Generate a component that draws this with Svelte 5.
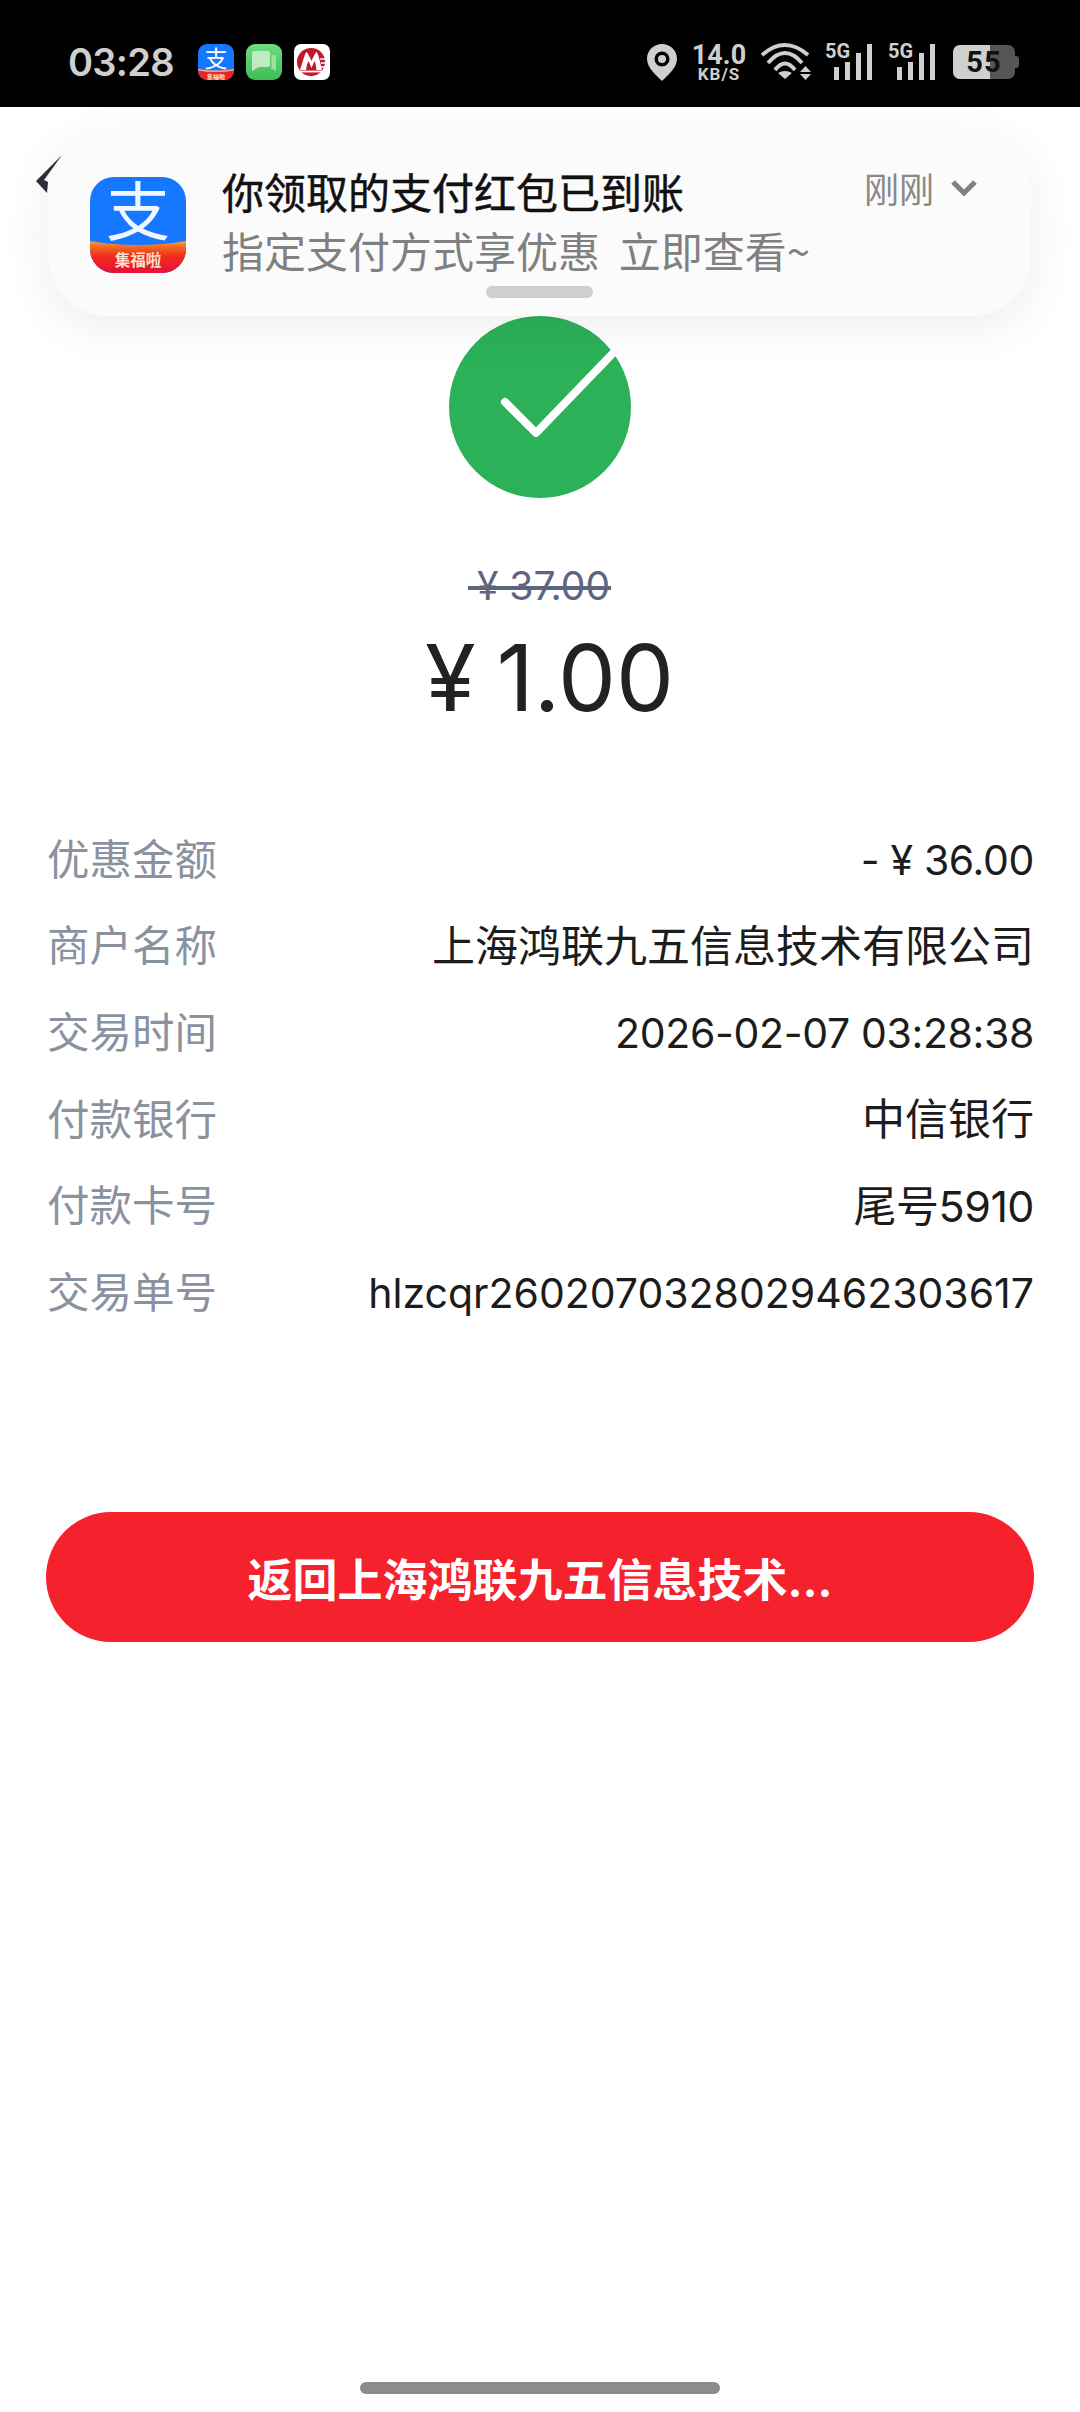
<script>
  const rows = [
    ['优惠金额', '- ¥ 36.00', 'latin tight'],
    ['商户名称', '上海鸿联九五信息技术有限公司', ''],
    ['交易时间', '2026-02-07 03:28:38', 'latin tight'],
    ['付款银行', '中信银行', ''],
    ['付款卡号', '尾号5910', 'mixed'],
    ['交易单号', 'hlzcqr2602070328029462303617', 'latin']
  ];
</script>

<div class="screen">
  <header class="status">
    <div class="left">
      <span class="time">03:28</span>
      <svg class="app" viewBox="0 0 36 36">
        <defs>
          <clipPath id="sq"><rect width="36" height="36" rx="9" /></clipPath>
          <linearGradient id="msg" x1="0" y1="0" x2="0" y2="1"><stop offset="0" stop-color="#6fdc7f" /><stop offset="1" stop-color="#3fbd58" /></linearGradient>
        </defs>
        <g clip-path="url(#sq)">
          <rect width="36" height="36" fill="#1677ff" />
          <path d="M0 26 Q18 29 36 26 V36 H0 Z" fill="#e8262a" />
          <path d="M0 25 Q18 28 36 25 V26.500 Q18 29.500 0 26.500 Z" fill="#f6b27a" />
        </g>
        <text x="18" y="23" text-anchor="middle" font-size="23" fill="#fff" class="svgt">支</text>
        <text x="18" y="34.500" text-anchor="middle" font-size="6" font-weight="700" fill="#ffe2c8" class="svgt">集福啦</text>
      </svg>
      <svg class="app" viewBox="0 0 36 36">
        <rect width="36" height="36" rx="9" fill="url(#msg)" />
        <path d="M6 9 Q6 7 8 7 H22 Q24 7 24 9 V21 Q24 23 22 23 H13 L6 27 Z" fill="#bfeac2" />
        <path d="M25.500 11 H28 Q30 11 30 13 V27 L25 24.500 H13 L15 24.500 H23 Q25.500 24.500 25.500 22 Z" fill="#9be3a4" />
      </svg>
      <svg class="app" viewBox="0 0 36 36">
        <rect width="36" height="36" rx="7" fill="#fff" />
        <circle cx="17" cy="18" r="14" fill="#c0182f" />
        <path d="M6 26 C9 18 10 11 12.500 8 C14.500 10 16 14 17.500 17 C19 14 20.500 10 22.500 8 C25 11 26 18 28 26 H22.500 C22 22 21.500 19 20.500 17 L17.500 24 L14.500 17 C13.500 19 12.500 22 12 26 Z" fill="#fff" />
        <path d="M4 27.500 h26" stroke="#fff" stroke-width="1.800" />
        <path d="M26 15h8M27 19h7M26 23h8" stroke="#fff" stroke-width="1.500" />
      </svg>
    </div>
    <div class="right">
      <svg class="pin" viewBox="0 0 30 37">
        <path d="M15 0C6.700 0 0 6.600 0 14.800 0 24 9 31 15 37c6-6 15-13 15-22.200C30 6.600 23.300 0 15 0z" fill="#cfcfcf" />
        <circle cx="15" cy="15" r="7.500" fill="#000" />
        <circle cx="15" cy="15" r="4" fill="#cfcfcf" />
      </svg>
      <div class="speed"><span class="num">14.0</span><span class="unit">KB/S</span></div>
      <svg class="wifi" viewBox="0 0 51 36">
        <path d="M2 11 Q25 -9 48 11" />
        <path d="M8 19 Q25 -1 42 19" />
        <path d="M15 26 Q25 13 35 26" />
        <path d="M18 29 Q25 25 32 29 L25 35 Z" class="solid" />
        <path d="M45.500 22 L51 28 H40 Z M40 30 H51 L45.500 36 Z" class="solid" />
      </svg>
      {#each [0, 1] as s}
        <div class="signal">
          <span class="g">5G</span>
          <div class="bars">
            <i class="b1"></i><i class="b2"></i><i class="b3"></i><i class="b4"></i>
          </div>
        </div>
      {/each}
      <div class="battery"><span class="fill"></span><b>55</b><span class="nub"></span></div>
    </div>
  </header>

  <main class="page">
    <div class="nav">
      <svg class="back" viewBox="0 0 26 38">
        <path d="M26 0 L0 26 L11 38 L12 27 L8 25 Z" fill="#2b2e3b" />
      </svg>
    </div>

    <div class="result">
      <svg class="ok" viewBox="0 0 182 182">
        <circle cx="91" cy="91" r="91" fill="#2bb158" />
        <path d="M56 86 L87 117 L168 33" fill="none" stroke="#fff" stroke-width="8" stroke-linecap="round" stroke-linejoin="round" />
      </svg>
      <div class="old">¥ 37.00</div>
      <div class="price">¥ 1.00</div>
    </div>

    <dl class="rows">
      {#each rows as [k, v, kind]}
        <div class="row"><dt>{k}</dt><dd class={kind}>{v}</dd></div>
      {/each}
    </dl>

    <div class="cta">返回上海鸿联九五信息技术...</div>
  </main>

  <div class="home"></div>

  <aside class="toast">
    <svg class="logo" viewBox="0 0 96 96">
      <defs>
        <clipPath id="lg"><rect width="96" height="96" rx="24" /></clipPath>
        <linearGradient id="rb" x1="0" y1="0" x2="0" y2="1"><stop offset="0" stop-color="#f5a04a" /><stop offset=".18" stop-color="#f2691f" /><stop offset=".5" stop-color="#ef2a1e" /><stop offset="1" stop-color="#e5103a" /></linearGradient>
      </defs>
      <g clip-path="url(#lg)">
        <rect width="96" height="96" fill="#1677ff" />
        <path d="M0 64 Q48 72 96 64 V96 H0 Z" fill="url(#rb)" />
      </g>
      <text x="48" y="58" text-anchor="middle" font-size="64" fill="#f2f7ff" class="svgt">支</text>
      <text x="48" y="89" text-anchor="middle" font-size="15.500" font-weight="700" fill="#ffe2c8" class="svgt">集福啦</text>
    </svg>
    <div class="msg">
      <div class="title">你领取的支付红包已到账</div>
      <div class="sub">指定支付方式享优惠&nbsp;&nbsp;立即查看~</div>
    </div>
    <div class="when">
      <span>刚刚</span>
      <svg class="caret" viewBox="0 0 26 16"><path d="M2 2 L13 13 L24 2" fill="none" stroke="#808080" stroke-width="5" /></svg>
    </div>
    <span class="handle"></span>
  </aside>
</div>

<style>
  :global(body) {
    margin: 0;
    background: #fff;
  }
  .screen {
    position: relative;
    width: 1080px;
    height: 2412px;
    overflow: hidden;
    background: #fff;
    font-family: Inter, "Noto Sans CJK SC", sans-serif;
  }
  .svgt {
    font-family: "Noto Sans CJK SC", sans-serif;
  }
  .status {
    height: 107px;
    background: #000;
    display: flex;
    justify-content: space-between;
    align-items: center;
    padding: 17px 65px 0 68px;
    box-sizing: border-box;
    color: #cfcfcf;
  }
  .left,
  .right {
    display: flex;
    align-items: center;
  }
  .left {
    gap: 12px;
  }
  .time {
    width: 118px;
    font-size: 38px;
    font-weight: 600;
    line-height: 40px;
    letter-spacing: -0.7px;
  }
  .app {
    width: 36px;
    height: 36px;
  }
  .pin {
    width: 30px;
    height: 37px;
    margin-right: 15px;
  }
  .speed {
    display: flex;
    flex-direction: column;
    align-items: center;
    width: 54px;
    margin-right: 14px;
    font-family: Roboto, sans-serif;
    font-weight: 700;
  }
  .num {
    font-size: 27px;
    line-height: 24px;
  }
  .unit {
    font-size: 17px;
    line-height: 14px;
    letter-spacing: 1px;
  }
  .wifi {
    width: 51px;
    height: 36px;
    margin-right: 14px;
    overflow: visible;
    fill: none;
    stroke: #cfcfcf;
    stroke-width: 3.800;
  }
  .wifi .solid {
    fill: #cfcfcf;
    stroke: none;
  }
  .signal {
    position: relative;
    width: 47px;
    height: 36px;
    margin-right: 16px;
  }
  .signal + .signal {
    margin-right: 18px;
  }
  .g {
    position: absolute;
    left: 0;
    top: -4px;
    font-family: Roboto, sans-serif;
    font-size: 20px;
    font-weight: 700;
    line-height: 22px;
  }
  .bars {
    position: absolute;
    right: 0;
    bottom: 0;
    display: flex;
    align-items: flex-end;
    gap: 6px;
  }
  .bars i {
    display: block;
    width: 5px;
    background: #cfcfcf;
  }
  .b1 {
    height: 13px;
  }
  .b2 {
    height: 18px;
  }
  .b3 {
    height: 27px;
  }
  .b4 {
    height: 36px;
  }
  .battery {
    position: relative;
    width: 62px;
    height: 34px;
    border-radius: 7px;
    background: #555;
    color: #111;
    display: flex;
    align-items: center;
    justify-content: center;
  }
  .fill {
    position: absolute;
    left: 0;
    top: 0;
    bottom: 0;
    width: 37px;
    border-radius: 7px 0 0 7px;
    background: #cfcfcf;
  }
  .battery b {
    position: relative;
    font-family: Roboto, sans-serif;
    font-size: 29px;
    font-weight: 700;
    letter-spacing: 1px;
  }
  .nub {
    position: absolute;
    right: -4px;
    top: 11px;
    width: 4px;
    height: 12px;
    background: #555;
    border-radius: 0 3px 3px 0;
  }
  .page {
    display: flex;
    flex-direction: column;
  }
  .nav {
    height: 209px;
    padding: 48px 0 0 36px;
    box-sizing: border-box;
  }
  .back {
    display: block;
    width: 26px;
    height: 38px;
  }
  .result {
    display: flex;
    flex-direction: column;
    align-items: center;
  }
  .ok {
    width: 182px;
    height: 182px;
    overflow: visible;
  }
  .old {
    position: relative;
    margin: 64px 0 0 7px;
    font-size: 39px;
    line-height: 48px;
    color: #5d6680;
  }
  .old::after {
    content: "";
    position: absolute;
    left: -9px;
    right: -1px;
    top: 24px;
    height: 4px;
    background: #5d6680;
  }
  .price {
    margin: 13px 0 0 19px;
    font-size: 92px;
    font-weight: 400;
    line-height: 110px;
    color: #222;
    word-spacing: -5px;
  }
  .rows {
    margin: 93px 46px 0 47px;
    display: flex;
    flex-direction: column;
    gap: 26.700px;
  }
  .row {
    display: flex;
    justify-content: space-between;
    align-items: center;
    height: 60px;
    font-size: 43px;
  }
  dt {
    color: #8a919f;
    font-size: 42.500px;
  }
  dd {
    margin: 0;
    color: #1c1c1c;
  }
  dd.latin {
    font-size: 41px;
    padding-top: 8px;
  }
  dd.tight {
    letter-spacing: -0.35px;
  }
  dd.mixed {
    letter-spacing: -0.5px;
  }
  .cta {
    margin: 193px 46px 0;
    height: 130px;
    border-radius: 65px;
    background: #f5222d;
    color: #fff;
    font-size: 45px;
    font-weight: 700;
    display: flex;
    align-items: center;
    justify-content: center;
  }
  .home {
    position: absolute;
    left: 360px;
    bottom: 18px;
    width: 360px;
    height: 12px;
    border-radius: 6px;
    background: #8c8c8c;
  }
  .toast {
    position: absolute;
    left: 48px;
    top: 135px;
    width: 983px;
    height: 181px;
    box-sizing: border-box;
    padding: 42px 0 0 42px;
    border-radius: 60px;
    background: #fbfbfb;
    box-shadow: 0 10px 50px rgba(0, 0, 0, 0.08);
    display: flex;
    align-items: flex-start;
  }
  .logo {
    width: 96px;
    height: 96px;
    flex: none;
  }
  .msg {
    margin: -13px 0 0 36px;
    flex: 1;
  }
  .title {
    font-size: 42px;
    line-height: 54px;
    color: #111;
    font-family: "Noto Sans CJK SC", sans-serif;
    font-weight: 400;
    -webkit-text-stroke: 0.5px #111;
  }
  .sub {
    margin-top: 5px;
    font-size: 42px;
    line-height: 54px;
    color: #808080;
    font-family: "Noto Sans CJK SC", sans-serif;
  }
  .when {
    display: flex;
    align-items: center;
    gap: 17px;
    margin: -12px 54px 0 0;
    font-size: 35px;
    line-height: 46px;
    color: #888;
    font-family: "Noto Sans CJK SC", sans-serif;
  }
  .caret {
    width: 26px;
    height: 16px;
  }
  .handle {
    position: absolute;
    left: 438px;
    bottom: 18px;
    width: 107px;
    height: 12px;
    border-radius: 6px;
    background: #cfcfcf;
  }
</style>
